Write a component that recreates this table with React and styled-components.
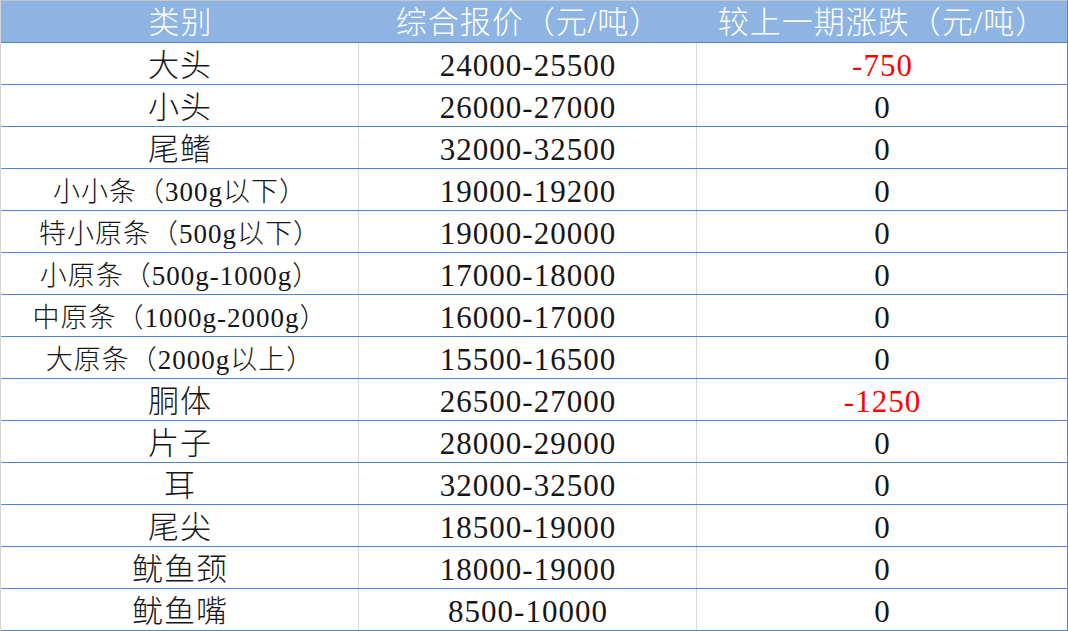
import React from 'react';
import styled, { createGlobalStyle } from 'styled-components';

const GlobalStyle = createGlobalStyle`
  html, body {
    margin: 0;
    padding: 0;
    background: #fff;
  }
`;

const Sheet = styled.div`
  width: 1066px;
  border-top: 1px solid #c6c6c6;
  border-left: 1px solid #d4d4d4;
  border-right: 1px solid #4f86d2;
  font-family: "Liberation Serif", "Noto Sans CJK SC", serif;
  color: #161616;
`;

const Row = styled.div`
  display: grid;
  grid-template-columns: 358px 338px 1fr;
  height: 41px;
  border-bottom: 1px solid #4f86d2;
  background: ${props => props.head ? '#8db4e2' : '#fff'};
  color: ${props => props.head ? '#fff' : 'inherit'};
`;

const Cell = styled.div`
  display: flex;
  align-items: flex-end;
  justify-content: center;
  padding-bottom: ${props => props.head ? '1px' : '0'};
  padding-left: 1px;
  font-size: ${props => props.small ? '27px' : '31px'};
  line-height: 36px;
  letter-spacing: 1px;
  font-weight: 300;
  white-space: nowrap;
  border-right: ${props => props.divider ? '1px solid #d9d9d9' : 'none'};
  color: ${props => props.down ? '#ff0000' : 'inherit'};
`;

const rows = [
  ['大头', '24000-25500', '-750'],
  ['小头', '26000-27000', '0'],
  ['尾鳍', '32000-32500', '0'],
  ['小小条（300g以下）', '19000-19200', '0'],
  ['特小原条（500g以下）', '19000-20000', '0'],
  ['小原条（500g-1000g）', '17000-18000', '0'],
  ['中原条（1000g-2000g）', '16000-17000', '0'],
  ['大原条（2000g以上）', '15500-16500', '0'],
  ['胴体', '26500-27000', '-1250'],
  ['片子', '28000-29000', '0'],
  ['耳', '32000-32500', '0'],
  ['尾尖', '18500-19000', '0'],
  ['鱿鱼颈', '18000-19000', '0'],
  ['鱿鱼嘴', '8500-10000', '0'],
];

export default function App() {
  return (
    <>
      <GlobalStyle />
      <Sheet>
        <Row head>
          <Cell head>类别</Cell>
          <Cell head>综合报价（元/吨）</Cell>
          <Cell head>较上一期涨跌（元/吨）</Cell>
        </Row>
        {rows.map(([name, price, change]) => (
          <Row key={name}>
            <Cell divider small={name.includes('（')}>{name}</Cell>
            <Cell divider>{price}</Cell>
            <Cell down={change.startsWith('-')}>{change}</Cell>
          </Row>
        ))}
      </Sheet>
    </>
  );
}
